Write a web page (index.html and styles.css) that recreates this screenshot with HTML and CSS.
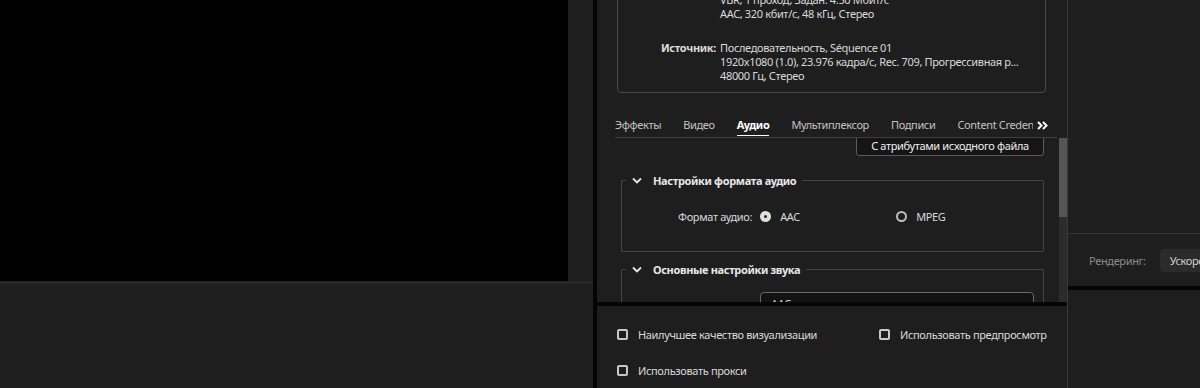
FILE: index.html
```
<!DOCTYPE html>
<html lang="ru">
<head>
    <meta charset="UTF-8">
    <title>Настройки экспорта</title>
    <link rel="stylesheet" href="styles.css">
</head>
<body>
    <div class="left-pane">
        <div class="monitor"></div>
        <div class="monitor-bottom"></div>
    </div>

    <div class="dialog">
        <div class="dialog-scroll">
            <div class="summary">
                <div class="summary-row">
                    <span class="summary-label"></span>
                    <div class="summary-value">
                        <div>VBR, 1 проход, Задан. 4.50 Мбит/с</div>
                        <div>AAC, 320 кбит/с, 48 кГц, Стерео</div>
                    </div>
                </div>
                <div class="summary-row">
                    <span class="summary-label">Источник:</span>
                    <div class="summary-value">
                        <div>Последовательность, Séquence 01</div>
                        <div>1920x1080 (1.0), 23.976 кадра/с, Rec. 709, Прогрессивная р...</div>
                        <div>48000 Гц, Стерео</div>
                    </div>
                </div>
            </div>

            <div class="tabs">
                <div class="tab-list">
                    <span class="tab">Эффекты</span>
                    <span class="tab">Видео</span>
                    <span class="tab active">Аудио</span>
                    <span class="tab">Мультиплексор</span>
                    <span class="tab">Подписи</span>
                    <span class="tab">Content Credentials</span>
                </div>
                <svg class="tab-more" width="11" height="9" viewBox="0 0 11 9"><path d="M1 1 L4.5 4.5 L1 8 M6 1 L9.5 4.5 L6 8" fill="none" stroke="#fff" stroke-width="2"/></svg>
            </div>

            <div class="tab-body">
                <div class="tab-content">
                    <div class="preset-row">
                        <button class="preset-button">С атрибутами исходного файла</button>
                    </div>

                    <fieldset class="group">
                        <legend class="group-title">
                            <svg class="chevron" width="10" height="7" viewBox="0 0 10 7"><path d="M1 1.5 L5 5.5 L9 1.5" fill="none" stroke="#e6e6e6" stroke-width="1.8"/></svg>
                            Настройки формата аудио
                        </legend>
                        <div class="radio-row">
                            <span class="field-label">Формат аудио:</span>
                            <label class="radio checked"><span class="dot"></span>AAC</label>
                            <label class="radio"><span class="dot"></span>MPEG</label>
                        </div>
                    </fieldset>

                    <fieldset class="group">
                        <legend class="group-title">
                            <svg class="chevron" width="10" height="7" viewBox="0 0 10 7"><path d="M1 1.5 L5 5.5 L9 1.5" fill="none" stroke="#e6e6e6" stroke-width="1.8"/></svg>
                            Основные настройки звука
                        </legend>
                        <div class="select-row">
                            <span class="field-label">Аудиокодек:</span>
                            <div class="select">AAC</div>
                        </div>
                    </fieldset>
                </div>
                <div class="scrollbar"><div class="thumb"></div></div>
            </div>
        </div>

        <div class="dialog-footer">
            <div class="check-row">
                <label class="check wide"><span class="box"></span>Наилучшее качество визуализации</label>
                <label class="check"><span class="box"></span>Использовать предпросмотр</label>
            </div>
            <div class="check-row">
                <label class="check wide"><span class="box"></span>Использовать прокси</label>
            </div>
        </div>
    </div>

    <div class="right-pane">
        <div class="right-top"></div>
        <div class="render-row">
            <span class="render-label">Рендеринг:</span>
            <span class="render-select">Ускоренный графическим процессором</span>
        </div>
        <div class="right-bottom"></div>
    </div>
</body>
</html>
```

FILE: styles.css
```
body {
    margin: 0;
    height: 388px;
    overflow: hidden;
    display: flex;
    background-color: #1e1e1e;
    font-family: "Noto Sans", "Open Sans", sans-serif;
    font-size: 11px;
    letter-spacing: -0.35px;
    color: #dadada;
}

/* левая часть: монитор программы */
.left-pane {
    width: 593px;
    flex-shrink: 0;
    border-right: 4px solid #050505;
    display: flex;
    flex-direction: column;
}

.monitor {
    width: 568px;
    height: 281px;
    background-color: #000;
}

.monitor-bottom {
    flex: 1;
    border-top: 3px solid #262626;
    background-color: #1f1f1f;
}

/* диалог экспорта */
.dialog {
    width: 470px;
    flex-shrink: 0;
    border-right: 1px solid #3a3a3a;
    display: flex;
    flex-direction: column;
    background-color: #1e1e1e;
}

.dialog-scroll {
    height: 302px;
    flex-shrink: 0;
    overflow: hidden;
    border-bottom: 4px solid #050505;
    display: flex;
    flex-direction: column;
}

.summary {
    margin: -22px 21px 0 20px;
    padding: 14px 0 9px;
    border: 1px solid #4a4a4a;
    border-radius: 4px;
}

.summary-row {
    display: flex;
    line-height: 14px;
    margin-bottom: 20px;
}

.summary-row:last-child {
    margin-bottom: 0;
}

.summary-label {
    width: 98px;
    text-align: right;
    font-weight: bold;
    padding-right: 4px;
}

.summary-value {
    white-space: nowrap;
}

.tabs {
    margin: 24px 10px 0 18px;
    height: 20px;
    display: flex;
    align-items: flex-start;
    border-bottom: 1px solid #3f3f3f;
}

.tab-list {
    width: 418px;
    display: flex;
    overflow: hidden;
    white-space: nowrap;
}

.tab {
    margin-right: 22px;
    color: #c4c4c4;
    line-height: 16px;
    padding-bottom: 2px;
}

.tab.active {
    color: #fff;
    font-weight: bold;
    border-bottom: 1px solid #fff;
}

.tab-more {
    margin: 4px 0 0 4px;
}

.tab-body {
    flex: 1;
    display: flex;
    overflow: hidden;
}

.tab-content {
    flex: 1;
    padding: 0 15px 0 24px;
}

.preset-row {
    display: flex;
    justify-content: flex-end;
    margin-top: -3px;
}

.preset-button {
    width: 188px;
    height: 21px;
    background-color: #151515;
    border: 1px solid #5a5a5a;
    border-radius: 3px;
    color: #f0f0f0;
    font-family: inherit;
    font-size: 11px;
    letter-spacing: -0.35px;
}

.group {
    margin: 17px 0 0 0;
    padding: 0;
    border: 1px solid #444;
    border-radius: 1px;
    height: 77px;
    min-width: 0;
}

.group + .group {
    margin-top: 10px;
}

.group-title {
    margin-left: 4px;
    padding: 0 6px;
    font-weight: bold;
    color: #e8e8e8;
    display: flex;
    align-items: center;
    gap: 11px;
}

.chevron {
    display: block;
}

.radio-row {
    display: flex;
    align-items: center;
    margin-top: 21px;
    padding-left: 56px;
}

.field-label {
    margin-right: 8px;
}

.radio {
    display: flex;
    align-items: center;
    gap: 9px;
    width: 136px;
}

.dot {
    width: 7px;
    height: 7px;
    border: 2px solid #bdbdbd;
    border-radius: 50%;
    background-color: #1e1e1e;
}

.radio.checked .dot {
    width: 3px;
    height: 3px;
    border: 4px solid #e0e0e0;
    background-color: #222;
}

.select-row {
    display: flex;
    align-items: flex-start;
    margin-top: 15px;
    padding-left: 56px;
}

.select-row .field-label {
    width: 74px;
    color: #1e1e1e;
}

.select {
    width: 262px;
    height: 22px;
    padding-left: 10px;
    border: 1px solid #6a6a6a;
    border-radius: 4px;
    background-color: #121212;
    line-height: 22px;
}

.scrollbar {
    width: 8px;
    background-color: #2c2c2c;
}

.thumb {
    height: 79px;
    background-color: #555;
}

.dialog-footer {
    flex: 1;
    padding: 19px 0 0 20px;
}

.check-row {
    display: flex;
    height: 18px;
    margin-bottom: 18px;
}

.check {
    display: flex;
    align-items: center;
    gap: 10px;
}

.check.wide {
    width: 262px;
}

.box {
    width: 7px;
    height: 7px;
    border: 2px solid #c8c8c8;
    border-radius: 2px;
}

/* правая часть */
.right-pane {
    flex: 1;
    display: flex;
    flex-direction: column;
    overflow: hidden;
}

.right-top {
    height: 233px;
    flex-shrink: 0;
    border-bottom: 1px solid #353535;
}

.render-row {
    height: 52px;
    flex-shrink: 0;
    display: flex;
    align-items: center;
    padding-left: 21px;
    gap: 14px;
    white-space: nowrap;
}

.render-label {
    color: #8c8c8c;
}

.render-select {
    background-color: #2b2b2b;
    border-radius: 4px;
    padding: 4px 10px;
    color: #d0d0d0;
}

.right-bottom {
    flex: 1;
    border-top: 4px solid #050505;
}
```
